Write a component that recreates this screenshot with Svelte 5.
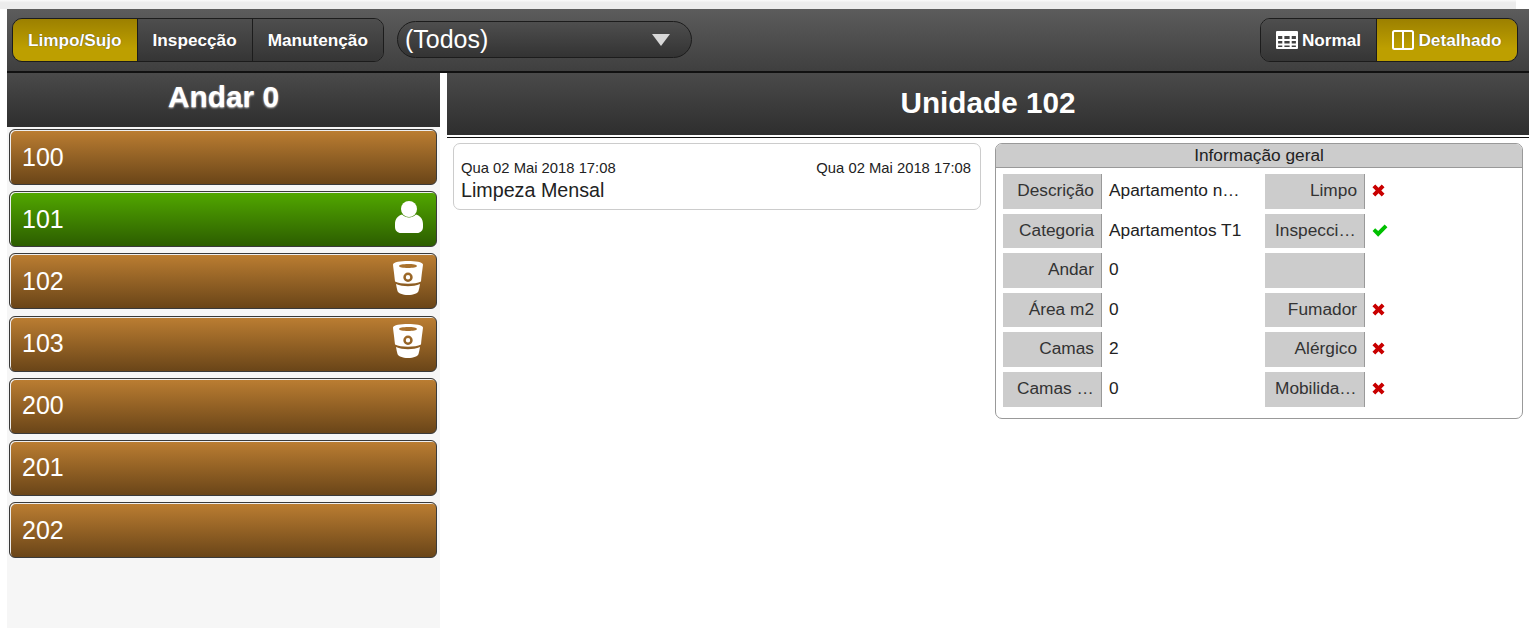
<script>
	const filters = ['Limpo/Sujo', 'Inspecção', 'Manutenção'];
	const rooms = [
		{ n: '100' },
		{ n: '101', state: 'busy' },
		{ n: '102', state: 'bucket' },
		{ n: '103', state: 'bucket' },
		{ n: '200' },
		{ n: '201' },
		{ n: '202' }
	];
	const info = [
		{ a: 'Descrição', v: 'Apartamento novo', b: 'Limpo', m: 'x' },
		{ a: 'Categoria', v: 'Apartamentos T1', b: 'Inspeccionado', m: 'ok' },
		{ a: 'Andar', v: '0', b: '', m: '' },
		{ a: 'Área m2', v: '0', b: 'Fumador', m: 'x' },
		{ a: 'Camas', v: '2', b: 'Alérgico', m: 'x' },
		{ a: 'Camas extra', v: '0', b: 'Mobilidade', m: 'x' }
	];
</script>

{#snippet mark(kind)}
	{#if kind === 'x'}
		<svg class="mark" width="13" height="13" viewBox="0 0 14 14"><path fill="#c90000" d="M.5 3.500 3.500.5 7 4l3.500-3.500 3 3L10 7l3.500 3.500-3 3L7 10l-3.500 3.500-3-3L4 7z" /></svg>
	{:else if kind === 'ok'}
		<svg class="mark" width="16" height="13" viewBox="0 0 16 14"><path fill="#00c000" d="M0 7.500 2.800 4.500l3.200 3L13 .5l3 3L6 13.800z" /></svg>
	{/if}
{/snippet}

<div class="strip"></div>
<div class="page">
	<header class="toolbar">
		<div class="seg">
			{#each filters as f, i}
				<button class="seg-btn" class:on={i === 0}>{f}</button>
			{/each}
		</div>
		<div class="select">
			<span>(Todos)</span>
			<svg width="18" height="12" viewBox="0 0 18 12"><path fill="#d8d8d8" d="M0 0h18L9 12z" /></svg>
		</div>
		<div class="seg views">
			<button class="seg-btn view">
				<svg width="22" height="18" viewBox="0 0 21 18" preserveAspectRatio="none"><path fill="#fff" fill-rule="evenodd" d="M1 0h19a1 1 0 0 1 1 1v16a1 1 0 0 1-1 1H1a1 1 0 0 1-1-1V1a1 1 0 0 1 1-1zm1 5v3h4V5zm6 0v3h5V5zm7 0v3h4V5zM2 10v2.500h4V10zm6 0v2.500h5V10zm7 0v2.500h4V10zM2 14.500V16h4v-1.500zm6 0V16h5v-1.500zm7 0V16h4v-1.500z" /></svg>
				Normal
			</button>
			<button class="seg-btn view on">
				<svg width="22" height="20" viewBox="0 0 22 20"><path fill="none" stroke="#fff" stroke-width="2" d="M2.500 1h17A1.500 1.500 0 0 1 21 2.500v15a1.500 1.500 0 0 1-1.500 1.500h-17A1.500 1.500 0 0 1 1 17.500v-15A1.500 1.500 0 0 1 2.500 1zM11 1v18" /></svg>
				Detalhado
			</button>
		</div>
	</header>

	<div class="body">
		<aside class="floor">
			<h2 class="floor-title">Andar 0</h2>
			<div class="rooms">
				{#each rooms as r}
					<div class="room" class:busy={r.state === 'busy'}>
						<span>{r.n}</span>
						{#if r.state === 'busy'}
							<svg class="person" width="28" height="32" viewBox="0 0 28 32"><circle cx="14" cy="8" r="8" fill="#fff" /><path fill="#fff" d="M7 13.500c4 4 10 4 14 0 4 1 7 4.500 7 9.500v3c0 3.500-2.500 6-6 6H6c-3.500 0-6-2.500-6-6v-3c0-5 3-8.500 7-9.500z" /></svg>
						{:else if r.state === 'bucket'}
							<svg class="bucket" width="30" height="34" viewBox="0 0 30 34"><path fill="#fff" fill-rule="evenodd" d="M15 0c7 0 15 1 15 3.500 0 1-1 7-2 17-6 3-20 3-26 0C1 10.500 0 4.500 0 3.500 0 1 8 0 15 0zM15 3C10 3 6 3.700 6 5s4 2 9 2 9-.7 9-2-4-2-9-2zm0 8.500a4.700 4.700 0 1 0 0 9.400 4.700 4.700 0 0 0 0-9.400zm0 2.500a2.200 2.200 0 1 1 0 4.400 2.200 2.200 0 0 1 0-4.400z" /><path fill="#fff" d="M3 23c7 3 17 3 24 0-.5 3-1 5-1.500 7-.3 2-5 4-10.500 4s-10-2-10.500-4C4 28 3.500 26 3 23z" /></svg>
						{/if}
					</div>
				{/each}
			</div>
		</aside>

		<main class="unit">
			<h1 class="unit-title">Unidade 102</h1>
			<div class="unit-body">
				<div class="task">
					<div class="dates"><span>Qua 02 Mai 2018 17:08</span><span>Qua 02 Mai 2018 17:08</span></div>
					<div class="task-name">Limpeza Mensal</div>
				</div>
				<section class="panel">
					<div class="panel-title">Informação geral</div>
					<div class="grid">
						{#each info as row}
							<div class="lbl first">{row.a}</div>
							<div class="val">{row.v}</div>
							<div class="lbl">{row.b}</div>
							<div class="val">{@render mark(row.m)}</div>
						{/each}
					</div>
				</section>
			</div>
		</main>
	</div>
</div>

<style>
	:global(body) {
		background: #fff;
		font-family: "Liberation Sans", Arial, sans-serif;
	}
	.strip {
		height: 9px;
		margin-right: 20px;
		background: linear-gradient(#fafafa, #ececec 30%, #ececec);
	}
	.page {
		margin: 0 7px;
		height: 619px;
		display: flex;
		flex-direction: column;
		overflow: hidden;
	}
	.toolbar {
		height: 63px;
		flex: none;
		box-sizing: border-box;
		display: flex;
		align-items: center;
		padding: 0 11px 0 5px;
		background: linear-gradient(#5c5c5c, #3f3f3f);
		border-bottom: 1px solid #111;
		box-shadow: 0 1px 0 #111;
	}
	.seg {
		display: flex;
		height: 44px;
		box-sizing: border-box;
		border: 1px solid #1c1c1c;
		border-radius: 10px;
		overflow: hidden;
	}
	.views {
		margin-left: auto;
	}
	.seg-btn {
		border: 0;
		border-right: 1px solid #1c1c1c;
		padding: 0 15px;
		font: bold 17.200px "Liberation Sans", Arial, sans-serif;
		color: #fff;
		text-shadow: 0 0 1px #333;
		background: linear-gradient(#4e4e4e, #353535);
		display: flex;
		align-items: center;
		gap: 4px;
	}
	.seg-btn:last-child {
		border-right: 0;
	}
	.seg-btn.on {
		background: linear-gradient(#9c8000, #bd9f00 70%);
	}
	.view {
		width: 116px;
		justify-content: center;
		padding: 0;
	}
	.view.on {
		width: 140px;
	}
	.select {
		width: 295px;
		height: 37px;
		margin: -1px 0 0 13px;
		box-sizing: border-box;
		border: 1px solid #1c1c1c;
		border-radius: 19px;
		display: flex;
		align-items: center;
		justify-content: space-between;
		padding: 0 21px 0 7px;
		font-size: 25px;
		color: #fff;
		background: linear-gradient(#4e4e4e, #333);
	}
	.body {
		flex: 1;
		display: flex;
		gap: 7px;
		min-height: 0;
	}
	.floor {
		width: 433px;
		flex: none;
		margin-top: 1px;
		background: #f6f6f6;
	}
	.floor-title,
	.unit-title {
		margin: 0;
		text-align: center;
		color: #fff;
		font-weight: bold;
		background: linear-gradient(#4a4a4a, #2e2e2e);
	}
	.floor-title {
		height: 54px;
		line-height: 48px;
		font-size: 29.800px;
		text-shadow: 0 1px 2px #ddd;
	}
	.rooms {
		display: flex;
		flex-direction: column;
		gap: 6.200px;
		padding: 2px 3px 2px 2px;
	}
	.room {
		height: 56px;
		box-sizing: border-box;
		flex: none;
		display: flex;
		align-items: center;
		justify-content: space-between;
		padding: 0 13px 0 12px;
		border: 1px solid #3a3a3a;
		border-radius: 6px;
		box-shadow: inset 1px 1px 0 #eee;
		color: #fff;
		font-size: 25px;
		background: linear-gradient(#bc7e32, #6a4518);
	}
	.room.busy {
		background: linear-gradient(#52a800, #2c5d00);
	}
	.bucket {
		margin-bottom: 6px;
	}
	.person {
		margin-bottom: 4px;
	}
	.unit {
		flex: 1;
		min-width: 0;
		margin-top: 1px;
	}
	.unit-title {
		height: 62px;
		line-height: 59px;
		font-size: 29.700px;
		border-bottom: 1px solid #fff;
		box-shadow: 0 1px 0 #fff, 0 2px 0 #111;
	}
	.unit-body {
		display: flex;
		align-items: flex-start;
		gap: 14px;
		padding: 7px 6px 0;
	}
	.task {
		width: 528px;
		height: 67px;
		flex: none;
		box-sizing: border-box;
		padding: 16px 9px 0 7px;
		border: 1px solid #ccc;
		border-radius: 7px;
		color: #222;
	}
	.dates {
		display: flex;
		justify-content: space-between;
		font-size: 14.800px;
		line-height: 16px;
	}
	.task-name {
		margin-top: 3px;
		font-size: 19.700px;
		line-height: 23px;
	}
	.panel {
		width: 528px;
		height: 276px;
		box-sizing: border-box;
		border: 1px solid #999;
		border-radius: 7px;
		overflow: hidden;
	}
	.panel-title {
		height: 23px;
		line-height: 23px;
		text-align: center;
		font-size: 17.300px;
		color: #222;
		background: #ccc;
		border-bottom: 1px solid #999;
	}
	.grid {
		display: grid;
		grid-template-columns: 99px 163px 100px 1fr;
		grid-auto-rows: 34.600px;
		row-gap: 5px;
		padding: 6px 7px;
		font-size: 17.300px;
		color: #222;
	}
	.lbl {
		background: #ccc;
		border-right: 1px solid #999;
		color: #333;
		text-align: right;
		line-height: 32px;
		padding: 0 7px 0 10px;
		white-space: nowrap;
		overflow: hidden;
		text-overflow: ellipsis;
	}
	.lbl.first {
		padding-left: 14px;
	}
	.val {
		line-height: 32px;
		padding: 0 20px 0 7px;
		white-space: nowrap;
		overflow: hidden;
		text-overflow: ellipsis;
		display: block;
	}
	.mark {
		vertical-align: -1px;
	}
</style>
